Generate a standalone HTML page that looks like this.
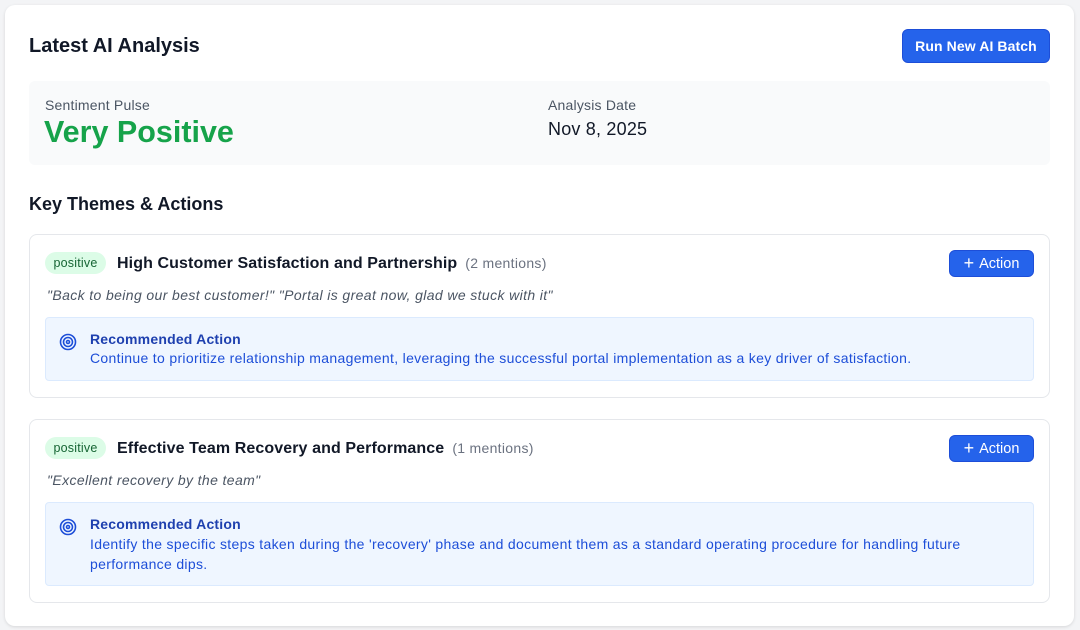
<!DOCTYPE html>
<html><head><style>
*{margin:0;padding:0;box-sizing:border-box}
body{width:1080px;height:630px;background:#f3f4f6;font-family:"Liberation Sans",sans-serif;position:relative;overflow:hidden;color:#111827}
.outer{position:absolute;left:5px;top:5px;width:1069px;height:621px;background:#fff;border-radius:10px;box-shadow:0 1px 3px rgba(0,0,0,.12)}
.a{position:absolute;white-space:nowrap}
.btn{position:absolute;background:#2563eb;color:#fff;border-radius:6px;display:flex;align-items:center;justify-content:center;border:1px solid #1d4ed8}
.card{position:absolute;left:29px;width:1021px;border:1px solid #e5e7eb;border-radius:8px;background:#fff}
.badge{position:absolute;left:45px;width:61px;height:22px;border-radius:11px;background:#dcfce7;color:#166534;font-size:12.5px;display:flex;align-items:center;justify-content:center;letter-spacing:.2px}
.rec{position:absolute;left:45px;width:989px;background:#eff6ff;border:1px solid #dbeafe;border-radius:4px}
.t{font-size:16px;font-weight:bold;color:#111827;letter-spacing:.1px}
.m{font-size:14px;color:#6b7280;font-weight:normal;margin-left:8px;letter-spacing:.3px}
.q{font-size:14px;font-style:italic;color:#4b5563;letter-spacing:.38px}
.rh{font-size:14px;font-weight:bold;color:#1e40af;letter-spacing:.2px}
.rb{font-size:14px;color:#1d4ed8;line-height:19.5px;letter-spacing:.32px}
</style></head><body>
<div class="outer"></div>
<div class="a" style="left:29px;top:35px;font-size:20px;font-weight:bold">Latest AI Analysis</div>
<div class="btn" style="left:902px;top:29px;width:148px;height:34px;font-size:14px;font-weight:bold;letter-spacing:.1px">Run New AI Batch</div>
<div class="a" style="left:29px;top:81px;width:1021px;height:84px;background:#f9fafb;border-radius:6px"></div>
<div class="a" style="left:45px;top:97px;font-size:14px;color:#4b5563;letter-spacing:.2px">Sentiment Pulse</div>
<div class="a" style="left:44px;top:115px;font-size:30.5px;font-weight:bold;color:#16a34a">Very Positive</div>
<div class="a" style="left:548px;top:97px;font-size:14px;color:#4b5563;letter-spacing:.2px">Analysis Date</div>
<div class="a" style="left:548px;top:119px;font-size:18px;color:#111827;letter-spacing:.2px">Nov 8, 2025</div>
<div class="a" style="left:29px;top:194px;font-size:18px;font-weight:bold">Key Themes &amp; Actions</div>

<div class="card" style="top:234px;height:164px"></div>
<div class="badge" style="top:252px">positive</div>
<div class="a t" style="left:117px;top:255px">High Customer Satisfaction and Partnership<span class="m">(2 mentions)</span></div>
<div class="btn" style="left:949px;top:250px;width:85px;height:27px;font-size:14.5px"><span style="font-size:18px;margin-right:5px">+</span>Action</div>
<div class="a q" style="left:47px;top:287px">"Back to being our best customer!" "Portal is great now, glad we stuck with it"</div>
<div class="rec" style="top:317px;height:64px"></div>
<svg class="a" style="left:59px;top:333px" width="18" height="18" viewBox="0 0 18 18" fill="none" stroke="#1d4ed8" stroke-width="1.6"><circle cx="9" cy="9" r="7.5"/><circle cx="9" cy="9" r="4.5"/><circle cx="9" cy="9" r="1.5"/></svg>
<div class="a rh" style="left:90px;top:331px">Recommended Action</div>
<div class="a rb" style="left:90px;top:349px">Continue to prioritize relationship management, leveraging the successful portal implementation as a key driver of satisfaction.</div>

<div class="card" style="top:419px;height:184px"></div>
<div class="badge" style="top:437px">positive</div>
<div class="a t" style="left:117px;top:440px">Effective Team Recovery and Performance<span class="m">(1 mentions)</span></div>
<div class="btn" style="left:949px;top:435px;width:85px;height:27px;font-size:14.5px"><span style="font-size:18px;margin-right:5px">+</span>Action</div>
<div class="a q" style="left:47px;top:472px">"Excellent recovery by the team"</div>
<div class="rec" style="top:502px;height:84px"></div>
<svg class="a" style="left:59px;top:518px" width="18" height="18" viewBox="0 0 18 18" fill="none" stroke="#1d4ed8" stroke-width="1.6"><circle cx="9" cy="9" r="7.5"/><circle cx="9" cy="9" r="4.5"/><circle cx="9" cy="9" r="1.5"/></svg>
<div class="a rh" style="left:90px;top:516px">Recommended Action</div>
<div class="a rb" style="left:90px;top:535px;white-space:normal;width:890px">Identify the specific steps taken during the 'recovery' phase and document them as a standard operating procedure for handling future performance dips.</div>
</body></html>
